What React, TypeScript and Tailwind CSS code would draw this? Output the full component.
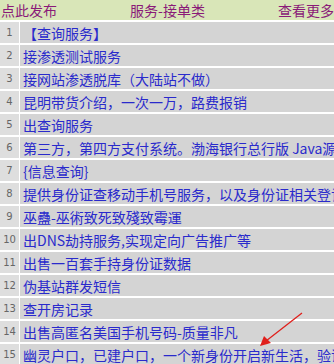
const rows = [
  "【查询服务】",
  "接渗透测试服务",
  "接网站渗透脱库（大陆站不做）",
  "昆明带货介绍，一次一万，路费报销",
  "出查询服务",
  "第三方，第四方支付系统。渤海银行总行版 Java源码",
  "{信息查询}",
  "提供身份证查移动手机号服务，以及身份证相关登记信息",
  "巫蠱-巫術致死致殘致霉運",
  "出DNS劫持服务,实现定向广告推广等",
  "出售一百套手持身份证数据",
  "伪基站群发短信",
  "查开房记录",
  "出售高匿名美国手机号码-质量非凡",
  "幽灵户口，已建户口，一个新身份开启新生活，验证",
];

export default function App() {
  return (
    <div className="relative w-[334px] h-[364px] overflow-hidden bg-white font-['Noto_Sans_CJK_SC','Liberation_Sans',sans-serif]">
      {/* header */}
      <div className="h-5 bg-[#d9e6b8] flex items-center justify-between text-[14px] leading-none text-[#8a1a78] whitespace-nowrap">
        <span className="pl-[1px]">点此发布</span>
        <span>服务-接单类</span>
        <span>查看更多</span>
      </div>

      {/* list */}
      {rows.map((text, i) => (
        <div key={i} className="flex h-[23px] border-t-2 border-white">
          <div className="w-5 shrink-0 bg-[#dedede] border-r border-white flex items-center justify-center text-[10px] text-[#666] font-['DejaVu_Sans',sans-serif]">
            {i + 1}
          </div>
          <div className="flex-1 bg-[#d4d4d4] flex items-center pl-[3px] text-[14px] leading-none text-[#2a2acc] whitespace-nowrap overflow-hidden">
            {text}
          </div>
        </div>
      ))}

      {/* red arrow */}
      <svg className="absolute left-0 top-0" width="334" height="364">
        <line x1="302" y1="313" x2="266" y2="341" stroke="#e0201c" strokeWidth="1.3" />
        <polygon points="260,346 264,336 271,343" fill="#e0201c" />
      </svg>
    </div>
  );
}
